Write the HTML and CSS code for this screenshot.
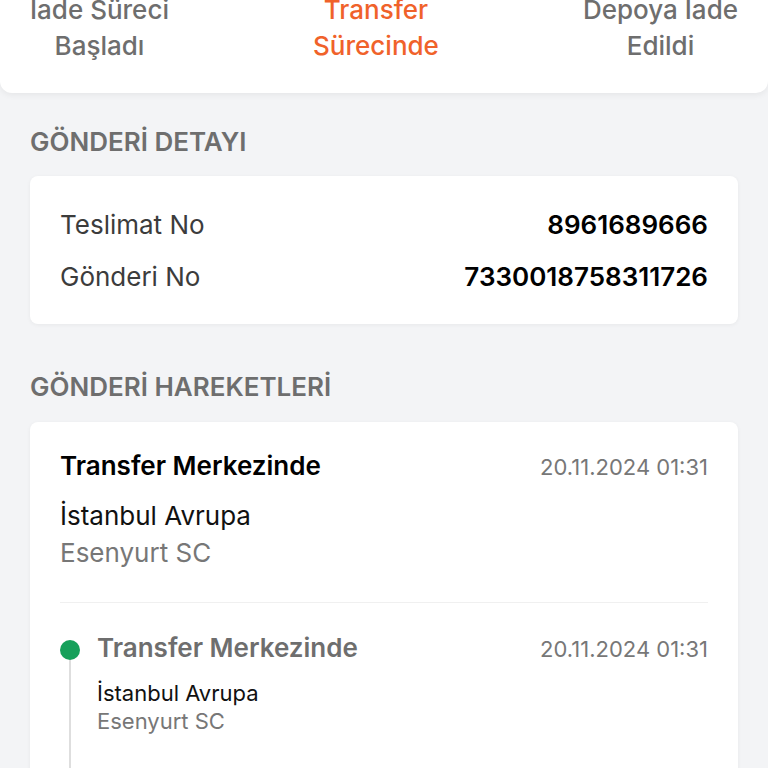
FILE: index.html
```html
<!DOCTYPE html>
<html lang="tr">
<head>
<meta charset="utf-8">
<link rel="stylesheet" href="styles.css">
</head>
<body>
<div class="page">
  <div class="steps">
    <div class="step">İade Süreci<br>Başladı</div>
    <div class="step active">Transfer<br>Sürecinde</div>
    <div class="step">Depoya İade<br>Edildi</div>
  </div>

  <h2 class="section-title first">GÖNDERİ DETAYI</h2>
  <div class="card details">
    <div class="row"><span class="label">Teslimat No</span><span class="value">8961689666</span></div>
    <div class="row"><span class="label">Gönderi No</span><span class="value">7330018758311726</span></div>
  </div>

  <h2 class="section-title">GÖNDERİ HAREKETLERİ</h2>
  <div class="card moves">
    <div class="summary">
      <div class="head"><span class="title">Transfer Merkezinde</span><span class="date">20.11.2024 01:31</span></div>
      <div class="city">İstanbul Avrupa</div>
      <div class="branch">Esenyurt SC</div>
    </div>
    <div class="timeline">
      <div class="event">
        <div class="rail"><span class="dot"></span><span class="line"></span></div>
        <div class="event-body">
          <div class="head"><span class="title muted">Transfer Merkezinde</span><span class="date">20.11.2024 01:31</span></div>
          <div class="city small">İstanbul Avrupa</div>
          <div class="branch small">Esenyurt SC</div>
        </div>
      </div>
    </div>
  </div>
</div>
</body>
</html>
```
FILE: styles.css
```css
* { box-sizing: border-box; }
html, body { margin: 0; padding: 0; }
body {
  background: #f3f4f6;
  font-family: Inter, "Noto Sans", sans-serif;
  color: #111;
  height: 768px;
  overflow: hidden;
}
.page { margin-top: -8px; }
.steps {
  background: #fff;
  display: flex;
  justify-content: space-between;
  padding: 0 30px 29px;
  border-radius: 0 0 12px 12px;
  box-shadow: 0 2px 6px rgba(0,0,0,0.06);
}
.step {
  text-align: center;
  font-size: 26px;
  line-height: 36px;
  font-weight: 500;
  color: #6e6e6e;
}
.step.active { color: #f0622a; }
.section-title {
  margin: 0;
  padding: 49px 30px 21px;
  font-size: 26px;
  line-height: 28px;
  font-weight: 600;
  color: #6e6e6e;
}
.section-title.first { padding: 35px 30px 20px; }
.card {
  margin: 0 30px;
  background: #fff;
  border-radius: 8px;
  box-shadow: 0 1px 4px rgba(0,0,0,0.05);
}
.details { padding: 34px 30px 32px; display: flex; flex-direction: column; gap: 22px; }
.row { display: flex; justify-content: space-between; align-items: baseline; font-size: 26px; line-height: 30px; }
.label { color: #3c3c3c; }
.value { font-weight: 600; color: #000; }
.moves { padding: 0 30px; height: 356px; }
.summary { padding: 29px 0 34px; border-bottom: 1px solid #f0f0f0; }
.head { display: flex; justify-content: space-between; align-items: baseline; }
.title { font-size: 26px; line-height: 30px; font-weight: 600; color: #000; }
.title.muted { color: #6e6e6e; }
.date { font-size: 22px; color: #777; }
.city { margin-top: 20px; font-size: 26px; line-height: 30px; color: #111; }
.branch { margin-top: 7px; font-size: 26px; line-height: 30px; color: #777; }
.city.small { margin-top: 17px; font-size: 22px; line-height: 26px; }
.branch.small { margin-top: 2px; font-size: 22px; line-height: 26px; }
.timeline { padding-top: 30px; }
.event { display: flex; gap: 17px; }
.rail { display: flex; flex-direction: column; align-items: center; width: 20px; padding-top: 7px; }
.dot { width: 20px; height: 20px; border-radius: 50%; background: #16a05a; flex: none; }
.line { width: 2px; flex: 1; min-height: 120px; background: #dedede; }
.event-body { flex: 1; }
```
